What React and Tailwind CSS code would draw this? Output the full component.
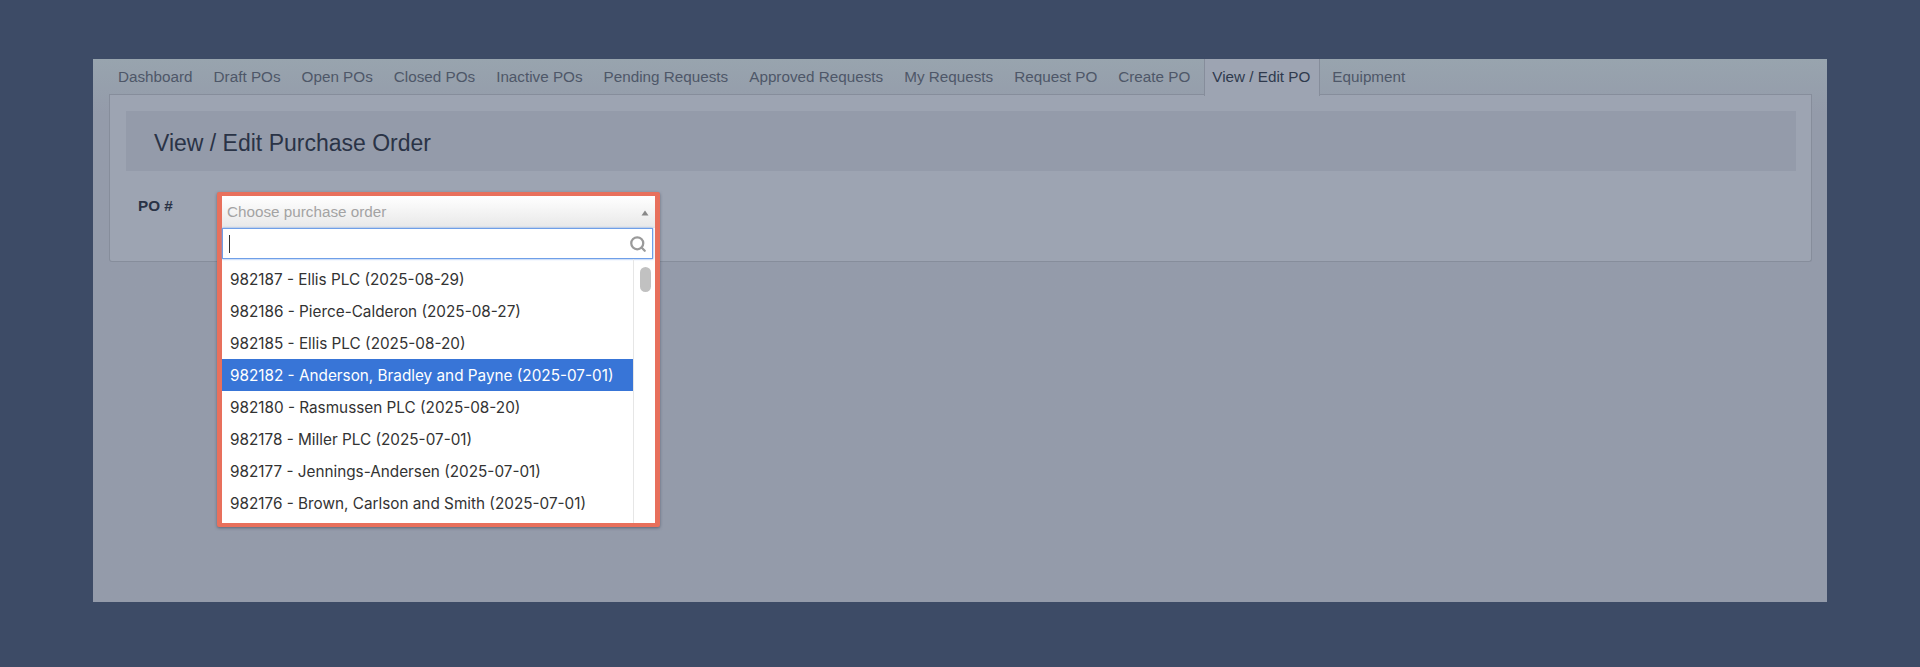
import { Search } from 'lucide-react';

const tabs = [
  'Dashboard', 'Draft POs', 'Open POs', 'Closed POs', 'Inactive POs', 'Pending Requests',
  'Approved Requests', 'My Requests', 'Request PO', 'Create PO', 'View / Edit PO', 'Equipment',
];

const orders = [
  '982187 - Ellis PLC (2025-08-29)',
  '982186 - Pierce-Calderon (2025-08-27)',
  '982185 - Ellis PLC (2025-08-20)',
  '982182 - Anderson, Bradley and Payne (2025-07-01)',
  '982180 - Rasmussen PLC (2025-08-20)',
  '982178 - Miller PLC (2025-07-01)',
  '982177 - Jennings-Andersen (2025-07-01)',
  '982176 - Brown, Carlson and Smith (2025-07-01)',
];

export default function App() {
  return (
    <div className="h-[667px] bg-[#3d4b66] pt-[59px] pl-[93px] font-['Liberation_Sans',sans-serif]">
      <div className="w-[1734px] h-[543px] bg-gradient-to-b from-[#98a4ae] via-[#949baa] via-10% to-[#949baa] pl-[16px] pr-[15px]">
        {/* Tabs */}
        <div className="flex h-[36px] gap-[7px] pl-[2px] border-b border-[#868d9b]">
          {tabs.map(tab => (
            <div
              key={tab}
              className={
                tab === 'View / Edit PO'
                  ? 'h-[37px] pl-[7px] pr-[9px] -mr-[2px] flex items-center text-[15.25px] text-[#2f3a4d] bg-[#9da4b2] border-x border-[#868d9b]'
                  : 'h-[36px] px-[7px] flex items-center text-[15.25px] text-[#4e5768]'
              }
            >
              {tab}
            </div>
          ))}
        </div>

        {/* Card */}
        <div className="h-[167px] bg-[#9da4b2] border-x border-b border-[#868d9b] rounded-b-[3px] pl-[16px] pr-[15px] pt-[16px]">
          <div className="h-[60px] bg-[#949baa] flex items-center pl-[28px] pt-[4px] text-[23px] text-[#2a3346]">
            View / Edit Purchase Order
          </div>

          <div className="flex mt-[21px]">
            <div className="w-[91px] pl-[12px] pt-[4px] text-[15.25px] leading-[20px] font-bold text-[#2a3346]">PO #</div>

            {/* Open select, hangs over the card */}
            <div className="relative w-[443px]">
              <div className="absolute top-0 left-0 w-[443px] h-[335px] border-x-[5px] border-t-[4px] border-b-[4px] border-[#e8705c] rounded-[2px] bg-white shadow-[0_1px_3px_rgba(40,50,70,0.5)]">
                <div className="h-[32px] flex items-center justify-between pl-[5px] pr-[6px] pt-[1px] bg-gradient-to-b from-white to-[#e8e8e8] text-[15.25px] text-[#a3a3a3]">
                  <span>Choose purchase order</span>
                  <svg width="8" height="6" viewBox="0 0 8 6"><path d="M4 0.5 7.5 5.5H0.5Z" fill="#888888" /></svg>
                </div>
                <div className="h-[31px] w-[431px] border border-[#6f9fe8] shadow-[0_0_2px_#6f9fe8] bg-white flex items-center justify-between pl-[6px] pr-[5px]">
                  <div className="w-px h-[18px] bg-[#333333]" />
                  <Search className="w-[18px] h-[18px] text-[#9a9a9a]" strokeWidth={3} />
                </div>
                <div className="flex h-[264px]">
                  <div className="w-[411px] pt-[4px] font-['Inter',sans-serif] text-[15.3px] text-[#333333]">
                    {orders.map(order => (
                      <div
                        key={order}
                        className={
                          order.startsWith('982182')
                            ? 'h-[32px] pl-[8px] pt-[2px] flex items-center bg-[#3875d7] text-white'
                            : 'h-[32px] pl-[8px] pt-[2px] flex items-center'
                        }
                      >
                        {order}
                      </div>
                    ))}
                  </div>
                  <div className="flex-1 border-l border-[#e6e6e6] pt-[8px] pl-[6px]">
                    <div className="w-[11px] h-[25px] rounded-full bg-[#c1c1c1]" />
                  </div>
                </div>
              </div>
            </div>
          </div>
        </div>
      </div>
    </div>
  );
}
